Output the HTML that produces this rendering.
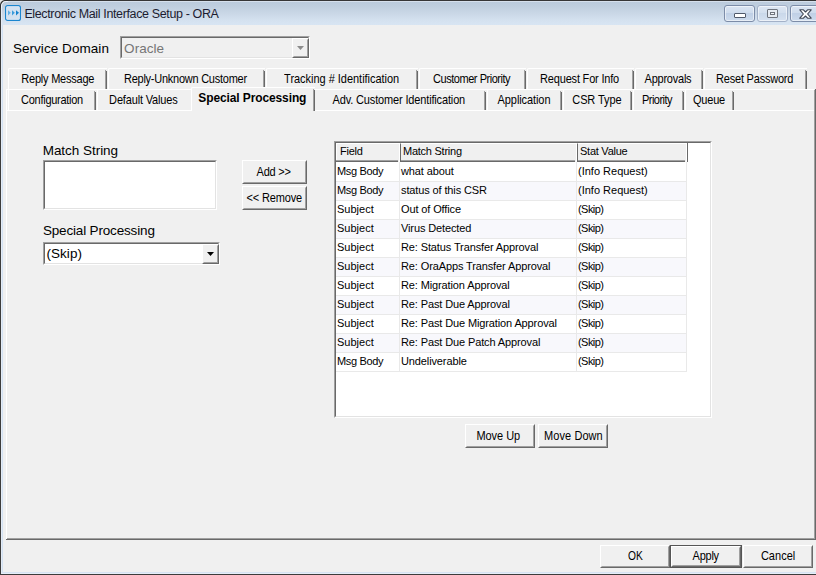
<!DOCTYPE html>
<html>
<head>
<meta charset="utf-8">
<title>Electronic Mail Interface Setup - ORA</title>
<style>
html,body{margin:0;padding:0;}
body{width:816px;height:575px;overflow:hidden;background:#f0f0f0;position:relative;
  font-family:"Liberation Sans",sans-serif;font-size:12px;color:#000;}
.abs,.abs *{position:absolute;box-sizing:border-box;}
.abs{left:0;top:0;width:816px;height:575px;overflow:hidden;}
/* window frame */
#titlebar{left:0;top:0;width:816px;height:25px;background:linear-gradient(#b9cadc 0px,#bfcede 6px,#cbd8e7 14px,#d5e2f0 21px,#d8e5f3 25px);}
#topline{left:5px;top:0;width:811px;height:1px;background:#363636;}
#topline2{left:6px;top:1px;width:810px;height:1px;background:#d6e0ec;}
#leftframe0{left:0;top:6px;width:1px;height:569px;background:#3c3c3c;}
#leftframe1{left:1px;top:6px;width:1px;height:568px;background:#e4ecf6;}
#leftframe2{left:2px;top:25px;width:1px;height:548px;background:#d3e1f2;}
#botframe0{left:0;top:574px;width:816px;height:1px;background:#3c3c3c;}
#botframe1{left:1px;top:573px;width:815px;height:1px;background:#e6eef8;}
#botframe2{left:2px;top:572px;width:814px;height:1px;background:#d6e3f3;}
#title{top:6px;height:16px;line-height:16px;font-size:12.5px;color:#1c1c30;white-space:nowrap;}
.lbl{white-space:nowrap;}
.cap{height:17px;top:5px;border:1px solid #7c8ca8;border-radius:3px;background:linear-gradient(#dbe5f2,#cfdced 45%,#c0d0e6 50%,#cddbed);box-shadow:inset 0 0 0 1px rgba(255,255,255,.55);}
.cap.dis{border-color:#a3b1c8;background:linear-gradient(#dde7f3,#d3dfee 45%,#cad8ea 50%,#d5e1f0);}
/* tabs */
.tab{border-left:1px solid #fff;border-top:1px solid #fff;background:#f0f0f0;border-top-left-radius:2px;}
.tab .r1{right:1px;top:1px;width:1px;bottom:0;background:#a0a0a0;}
.tab .r2{right:0;top:2px;width:1px;bottom:0;background:#696969;}
.tab span,.btn span{top:3px;white-space:nowrap;line-height:14px;font-size:11px;transform:scaleY(1.12);transform-origin:0 50%;}
.tab.sel span{font-weight:bold;top:3px;font-size:12px;transform:scaleY(1.04);}
.hl{background:#fff;}
.btn{background:#f0f0f0;border:1px solid;border-color:#fff #696969 #696969 #fff;}
.btn .in{left:0;top:0;right:0;bottom:0;border:1px solid;border-color:#f0f0f0 #a0a0a0 #a0a0a0 #f0f0f0;}

.sunken{border:1px solid;border-color:#a0a0a0 #fff #fff #a0a0a0;}
.sunken>.in{left:0;top:0;right:0;bottom:0;border:1px solid;border-color:#696969 #e3e3e3 #e3e3e3 #696969;}
.l13{font-size:13.5px;line-height:16px;white-space:nowrap;}
/* grid */
#gridbox{left:334px;top:141px;width:378px;height:277px;background:#fff;}
.hd{top:143px;height:19px;background:#f0f0f0;border-top:1px solid #fff;border-right:1px solid #fff;border-left:1px solid #696969;}
.hd .in{left:-1px;right:1px;bottom:0;height:2px;border-top:1px solid #a0a0a0;background:#696969;}
.hd span{left:2px;top:1px;font-size:11px;line-height:13px;white-space:nowrap;letter-spacing:-0.25px;}
#grid{left:336px;top:163px;width:351px;height:209px;}
.row{left:0;width:351px;height:19px;background:#fff;border-bottom:1px solid #e9e9e9;}
.row.alt{background:#f8f8fc;}
.row span{top:-1px;height:19px;line-height:19px;font-size:11px;white-space:nowrap;border-right:1px solid #e9e9e9;padding-left:1px;}
.c1{left:0;width:64px;}
.c2{left:64px;width:177px;letter-spacing:-0.12px;}
.c3{left:241px;width:110px;}
.nar{letter-spacing:-0.55px;}
.nar2{letter-spacing:-0.35px;}
</style>
</head>
<body>
<div class="abs">
<!-- window frame -->
<div id="titlebar"></div>
<div id="topline"></div><div id="topline2"></div>
<div id="leftframe0"></div><div id="leftframe1"></div><div id="leftframe2"></div>
<div id="botframe2"></div><div id="botframe1"></div><div id="botframe0"></div>
<svg style="left:0;top:0;" width="8" height="8" viewBox="0 0 8 8"><path d="M0 0h6L0 6z" fill="#e4e4e4"/><path d="M0.5 8V5.5A5 5 0 0 1 5.5 0.5H8" fill="none" stroke="#303030" stroke-width="1.2"/><path d="M1.5 8V6A4.5 4.5 0 0 1 6 1.5H8" fill="none" stroke="#eef3fa" stroke-width="1"/></svg>
<svg style="left:5px;top:5px;" width="16" height="16" viewBox="0 0 16 16"><rect x="0.6" y="0.6" width="14.8" height="14.8" rx="2" fill="#d3e1f0" stroke="#1b86cf" stroke-width="1.2"/><rect x="1.7" y="1.7" width="12.6" height="12.6" rx="1" fill="none" stroke="#e2ecf7" stroke-width="0.6"/><path d="M3 5.2l2.8 2.6L3 10.4z" fill="#62b1e6"/><path d="M7 5.2l2.8 2.6L7 10.4z" fill="#3a9bdb"/><path d="M11 5.2l3 2.6l-3 2.6z" fill="#1583cf"/></svg>
<div id="title" class="lbl" style="left:24.4px;letter-spacing:-0.366px;">Electronic Mail Interface Setup - ORA</div>
<div class="cap" style="left:724px;width:31px;"><div style="left:9px;top:7px;width:12px;height:5px;background:#fff;border:1px solid #50596a;border-radius:1px;"></div></div>
<div class="cap dis" style="left:757px;width:31px;"><div style="left:9px;top:3px;width:11px;height:9px;background:#e6ebf2;border:1px solid #6f747d;border-radius:1px;"></div><div style="left:12px;top:6px;width:5px;height:3px;background:#f6f8fb;border:1px solid #6f747d;"></div></div>
<div class="cap" style="left:790px;width:31px;"><svg style="left:8px;top:3px;" width="13" height="10" viewBox="0 0 13 10"><path d="M0.8 0.8h3.6l2.1 2.2l2.1-2.2h3.6L8.6 5l3.6 4.2H8.6L6.5 7L4.4 9.2H0.8L4.4 5z" fill="#fff" stroke="#3f4654" stroke-width="1.1" stroke-linejoin="round"/></svg></div>
<!-- service domain -->
<div class="l13" style="left:12.9px;letter-spacing:0.056px;top:41px;">Service Domain</div>
<div class="sunken" style="left:120px;top:36px;width:190px;height:23px;"><div class="in"></div>
<div class="l13" style="left:3.1px;letter-spacing:0.049px;top:4px;color:#767676;">Oracle</div>
<div class="btn" style="left:171px;top:1px;width:17px;height:20px;"><div class="in"></div><svg style="left:4px;top:7px" width="7" height="4" viewBox="0 0 7 4"><path d="M0 0h7L3.5 4z" fill="#8c8c8c"/></svg></div>
</div>
<!-- tab control -->
<div class="tab " style="left:8px;top:68px;width:99px;height:21px;"><div class="r1"></div><div class="r2"></div><span style="left:12.3px;letter-spacing:-0.225px;">Reply Message</span></div>
<div class="tab " style="left:108px;top:68px;width:157px;height:21px;"><div class="r1"></div><div class="r2"></div><span style="left:15.0px;letter-spacing:-0.253px;">Reply-Unknown Customer</span></div>
<div class="tab " style="left:266px;top:68px;width:152px;height:21px;"><div class="r1"></div><div class="r2"></div><span style="left:17.1px;letter-spacing:-0.027px;">Tracking # Identification</span></div>
<div class="tab " style="left:419px;top:68px;width:107px;height:21px;"><div class="r1"></div><div class="r2"></div><span style="left:13.1px;letter-spacing:-0.466px;">Customer Priority</span></div>
<div class="tab " style="left:527px;top:68px;width:107px;height:21px;"><div class="r1"></div><div class="r2"></div><span style="left:12.1px;letter-spacing:-0.188px;">Request For Info</span></div>
<div class="tab " style="left:635px;top:68px;width:68px;height:21px;"><div class="r1"></div><div class="r2"></div><span style="left:8.6px;letter-spacing:-0.239px;">Approvals</span></div>
<div class="tab " style="left:704px;top:68px;width:103px;height:21px;"><div class="r1"></div><div class="r2"></div><span style="left:11.1px;letter-spacing:-0.213px;">Reset Password</span></div>
<!-- tab panel -->
<div class="hl" style="left:6px;top:89px;width:1px;height:450px;"></div>
<div class="hl" style="left:6px;top:89px;width:808px;height:1px;"></div>
<div style="left:814px;top:90px;width:1px;height:449px;background:#a0a0a0;"></div>
<div style="left:815px;top:89px;width:1px;height:451px;background:#696969;"></div>
<div style="left:7px;top:538px;width:808px;height:1px;background:#a0a0a0;"></div>
<div style="left:6px;top:539px;width:810px;height:1px;background:#696969;"></div>
<div class="hl" style="left:6px;top:110px;width:808px;height:1px;"></div>
<div class="tab " style="left:8px;top:89px;width:88px;height:21px;"><div class="r1"></div><div class="r2"></div><span style="left:12.1px;letter-spacing:-0.276px;">Configuration</span></div>
<div class="tab " style="left:97px;top:89px;width:96px;height:21px;"><div class="r1"></div><div class="r2"></div><span style="left:11.1px;letter-spacing:-0.156px;">Default Values</span></div>
<div class="tab " style="left:313px;top:89px;width:173px;height:21px;"><div class="r1"></div><div class="r2"></div><span style="left:18.6px;letter-spacing:-0.153px;">Adv. Customer Identification</span></div>
<div class="tab " style="left:487px;top:89px;width:75px;height:21px;"><div class="r1"></div><div class="r2"></div><span style="left:9.6px;letter-spacing:-0.09px;">Application</span></div>
<div class="tab " style="left:563px;top:89px;width:69px;height:21px;"><div class="r1"></div><div class="r2"></div><span style="left:8.3px;letter-spacing:-0.102px;">CSR Type</span></div>
<div class="tab " style="left:633px;top:89px;width:51px;height:21px;"><div class="r1"></div><div class="r2"></div><span style="left:7.9px;letter-spacing:-0.504px;">Priority</span></div>
<div class="tab " style="left:685px;top:89px;width:49px;height:21px;"><div class="r1"></div><div class="r2"></div><span style="left:6.9px;letter-spacing:-0.177px;">Queue</span></div>
<div class="tab sel" style="left:191px;top:87px;width:124px;height:24px;"><div class="r1"></div><div class="r2"></div><span style="left:6.3px;letter-spacing:-0.113px;">Special Processing</span></div>
<!-- page content -->
<div class="l13" style="left:42.7px;letter-spacing:-0.034px;top:143px;">Match String</div>
<div class="sunken" style="left:43px;top:160px;width:174px;height:50px;background:#fff;"><div class="in"></div></div>
<div class="btn" style="left:242px;top:160px;width:65px;height:24px;"><div class="in"></div><span style="top:4px;left:13.6px;letter-spacing:-0.25px;">Add &gt;&gt;</span></div>
<div class="btn" style="left:242px;top:186px;width:65px;height:24px;"><div class="in"></div><span style="top:4px;left:3.6px;letter-spacing:-0.156px;">&lt;&lt; Remove</span></div>
<div class="l13" style="left:42.9px;letter-spacing:-0.165px;top:223px;">Special Processing</div>
<div class="sunken" style="left:43px;top:242px;width:177px;height:23px;background:#fff;"><div class="in"></div>
<div class="l13" style="left:2.6px;letter-spacing:0.009px;top:3px;">(Skip)</div>
<div class="btn" style="left:158px;top:1px;width:17px;height:20px;"><div class="in"></div><svg style="left:4px;top:7px" width="7" height="4" viewBox="0 0 7 4"><path d="M0 0h7L3.5 4z" fill="#000"/></svg></div>
</div>
<div id="gridbox" class="sunken"><div class="in"></div></div>
<div class="hd" style="left:336px;width:64px;border-left-color:#fff;"><div class="in"></div><span style="left:3px;">Field</span></div>
<div class="hd" style="left:400px;width:177px;"><div class="in" style="left:0"></div><span>Match String</span></div>
<div class="hd" style="left:577px;width:110px;"><div class="in" style="left:0"></div><span>Stat Value</span></div>
<div style="left:687px;top:143px;width:1px;height:19px;background:#696969;"></div>
<div id="grid">
<div class="row" style="top:0px;"><span class="c1 nar2">Msg Body</span><span class="c2">what about</span><span class="c3">(Info Request)</span></div>
<div class="row alt" style="top:19px;"><span class="c1 nar2">Msg Body</span><span class="c2">status of this CSR</span><span class="c3">(Info Request)</span></div>
<div class="row" style="top:38px;"><span class="c1">Subject</span><span class="c2">Out of Office</span><span class="c3 nar">(Skip)</span></div>
<div class="row alt" style="top:57px;"><span class="c1">Subject</span><span class="c2">Virus Detected</span><span class="c3 nar">(Skip)</span></div>
<div class="row" style="top:76px;"><span class="c1">Subject</span><span class="c2">Re: Status Transfer Approval</span><span class="c3 nar">(Skip)</span></div>
<div class="row alt" style="top:95px;"><span class="c1">Subject</span><span class="c2">Re: OraApps Transfer Approval</span><span class="c3 nar">(Skip)</span></div>
<div class="row" style="top:114px;"><span class="c1">Subject</span><span class="c2">Re: Migration Approval</span><span class="c3 nar">(Skip)</span></div>
<div class="row alt" style="top:133px;"><span class="c1">Subject</span><span class="c2">Re: Past Due Approval</span><span class="c3 nar">(Skip)</span></div>
<div class="row" style="top:152px;"><span class="c1">Subject</span><span class="c2">Re: Past Due Migration Approval</span><span class="c3 nar">(Skip)</span></div>
<div class="row alt" style="top:171px;"><span class="c1">Subject</span><span class="c2">Re: Past Due Patch Approval</span><span class="c3 nar">(Skip)</span></div>
<div class="row" style="top:190px;"><span class="c1 nar2">Msg Body</span><span class="c2">Undeliverable</span><span class="c3 nar">(Skip)</span></div>
</div>
<div class="btn" style="left:465px;top:424px;width:70px;height:24px;"><div class="in"></div><span style="top:4px;left:10.4px;letter-spacing:-0.033px;">Move Up</span></div>
<div class="btn" style="left:538px;top:424px;width:70px;height:24px;"><div class="in"></div><span style="top:4px;left:5.1px;letter-spacing:0.068px;">Move Down</span></div>
<!-- bottom buttons -->
<div class="btn" style="left:600px;top:545px;width:70px;height:23px;"><div class="in"></div><span style="left:27.2px;transform:scale(.93,1.12);">OK</span></div>
<div class="btn" style="left:670px;top:545px;width:72px;height:23px;border-color:#555;"><div class="in" style="border-color:#fff #696969 #696969 #fff;"></div><div class="in" style="left:1px;top:1px;right:1px;bottom:1px;"></div><span style="left:21.6px;letter-spacing:-0.254px;">Apply</span></div>
<div class="btn" style="left:743px;top:545px;width:70px;height:23px;"><div class="in"></div><span style="left:16.9px;letter-spacing:0.021px;">Cancel</span></div>
</div>
</body>
</html>
